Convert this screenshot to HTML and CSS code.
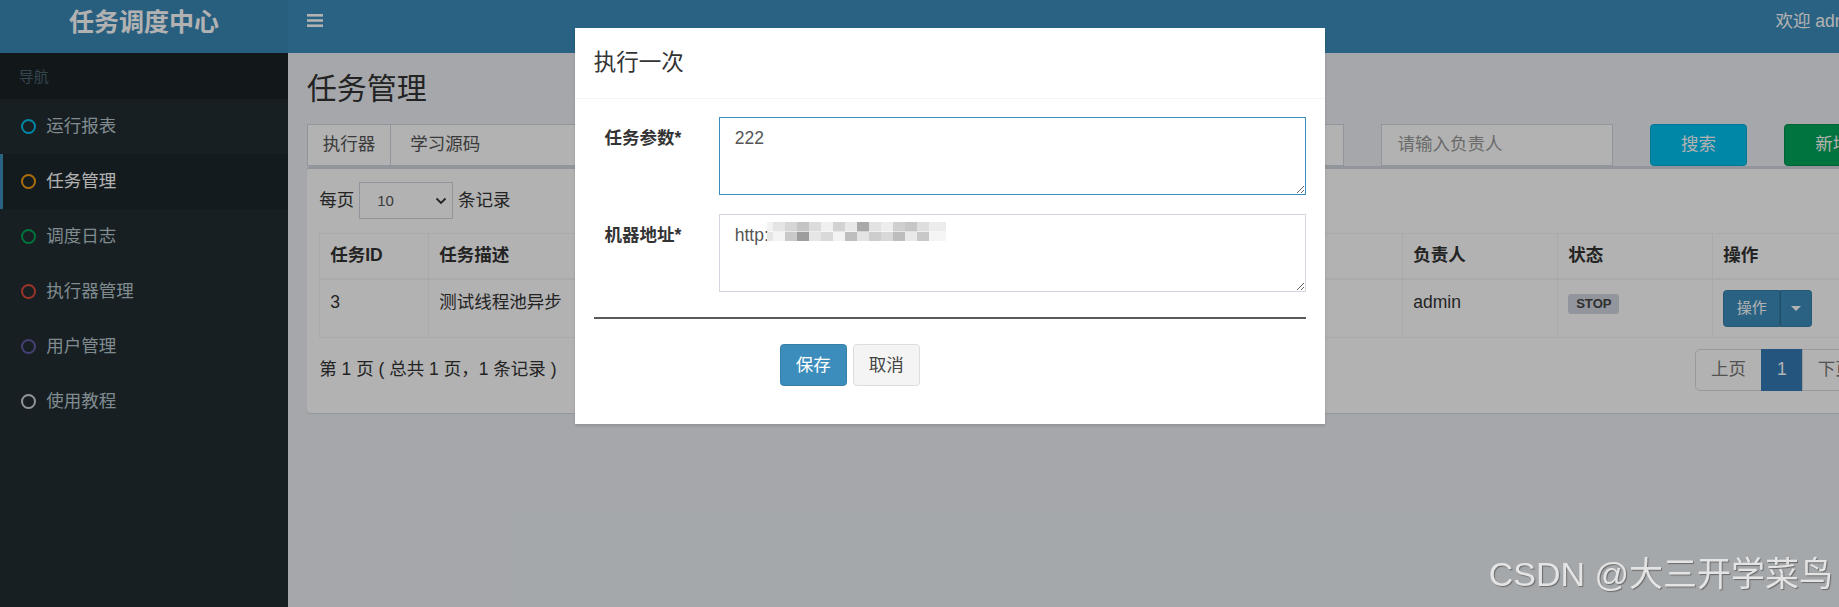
FILE: index.html
```html
<!DOCTYPE html>
<html lang="zh-CN">
<head>
    <meta charset="UTF-8">
    <meta name="viewport" content="width=device-width, initial-scale=1.0">
    <title>任务调度中心</title>
    <link rel="stylesheet" href="styles.css">
</head>
<body>

<div class="wrapper">

    <!-- Header -->
    <a class="logo" href="#">任务调度中心</a>
    <nav class="navbar">
        <a class="sidebar-toggle" href="#" title="切换导航">
            <svg width="16" height="13" viewBox="0 0 16 13">
                <rect x="0" y="0" width="16" height="2.6"/>
                <rect x="0" y="5.2" width="16" height="2.6"/>
                <rect x="0" y="10.4" width="16" height="2.6"/>
            </svg>
        </a>
        <div class="navbar-user">欢迎 admin</div>
    </nav>

    <!-- Sidebar -->
    <aside class="sidebar">
        <div class="sidebar-header">导航</div>
        <ul class="sidebar-menu">
            <li><a href="#"><i class="dot dot-aqua"></i>运行报表</a></li>
            <li class="active"><a href="#"><i class="dot dot-yellow"></i>任务管理</a></li>
            <li><a href="#"><i class="dot dot-green"></i>调度日志</a></li>
            <li><a href="#"><i class="dot dot-red"></i>执行器管理</a></li>
            <li><a href="#"><i class="dot dot-purple"></i>用户管理</a></li>
            <li><a href="#"><i class="dot dot-gray"></i>使用教程</a></li>
        </ul>
    </aside>

    <!-- Main content -->
    <main class="content-wrapper">
        <h1 class="content-title">任务管理</h1>

        <div class="filter-row">
            <div class="col-3">
                <div class="input-group">
                    <span class="input-addon">执行器</span>
                    <select class="form-control">
                        <option>学习源码</option>
                    </select>
                </div>
            </div>
            <div class="col-1">
                <select class="form-control">
                    <option>全部</option>
                </select>
            </div>
            <div class="col-2">
                <input class="form-control" type="text" placeholder="请输入任务描述">
            </div>
            <div class="col-2">
                <input class="form-control" type="text" placeholder="请输入JobHandler">
            </div>
            <div class="col-2">
                <input class="form-control" type="text" placeholder="请输入负责人">
            </div>
            <div class="col-1">
                <button class="btn btn-info btn-block">搜索</button>
            </div>
            <div class="col-1">
                <button class="btn btn-success btn-block">新增</button>
            </div>
        </div>

        <div class="box">
            <div class="box-body">
                <div class="table-length">
                    每页
                    <span class="select-wrap">
                        <select class="length-select">
                            <option>10</option>
                            <option>25</option>
                            <option>50</option>
                        </select>
                        <svg class="chevron" width="12" height="8" viewBox="0 0 12 8">
                            <path d="M1.5 1.5 L6 6 L10.5 1.5" fill="none" stroke="#333" stroke-width="1.8"/>
                        </svg>
                    </span>
                    条记录
                </div>

                <table class="table">
                    <colgroup>
                        <col class="w-id">
                        <col class="w-desc">
                        <col class="w-cron">
                        <col class="w-mode">
                        <col class="w-author">
                        <col class="w-status">
                        <col>
                    </colgroup>
                    <thead>
                        <tr>
                            <th>任务ID</th>
                            <th>任务描述</th>
                            <th>调度类型</th>
                            <th>运行模式</th>
                            <th>负责人</th>
                            <th>状态</th>
                            <th>操作</th>
                        </tr>
                    </thead>
                    <tbody>
                        <tr>
                            <td>3</td>
                            <td>测试线程池异步</td>
                            <td>CRON：0/5 * * * * ?</td>
                            <td>BEAN：demoJobHandler</td>
                            <td>admin</td>
                            <td><span class="label">STOP</span></td>
                            <td>
                                <div class="btn-group">
                                    <button class="btn btn-primary btn-sm">操作</button>
                                    <button class="btn btn-primary btn-sm dropdown-toggle"><span class="caret"></span></button>
                                </div>
                            </td>
                        </tr>
                    </tbody>
                </table>

                <div class="table-footer">
                    <div class="table-info">第 1 页 ( 总共 1 页，1 条记录 )</div>
                    <ul class="pagination">
                        <li class="disabled"><a href="#">上页</a></li>
                        <li class="active"><a href="#">1</a></li>
                        <li class="disabled"><a href="#">下页</a></li>
                    </ul>
                </div>
            </div>
        </div>
    </main>

    <!-- Trigger modal -->
    <div class="modal-backdrop"></div>
    <div class="modal">
        <div class="modal-dialog">
            <div class="modal-header">
                <h4 class="modal-title">执行一次</h4>
            </div>
            <div class="modal-body">
                <form class="form-horizontal">
                    <div class="form-group">
                        <label class="control-label">任务参数*</label>
                        <div class="control">
                            <textarea class="form-control textarea is-focused">222</textarea>
                        </div>
                    </div>
                    <div class="form-group">
                        <label class="control-label">机器地址*</label>
                        <div class="control">
                            <textarea class="form-control textarea">http:</textarea>
                            <!-- address blurred in the screenshot -->
                            <div class="mosaic"></div>
                        </div>
                    </div>
                    <hr>
                    <div class="form-actions">
                        <button type="button" class="btn btn-primary">保存</button>
                        <button type="button" class="btn btn-default">取消</button>
                    </div>
                </form>
            </div>
        </div>
    </div>
</div>

<div class="watermark">CSDN @大三开学菜鸟</div>

</body>
</html>
```

FILE: styles.css
```css
* {
    box-sizing: border-box;
}

html, body {
    margin: 0;
    padding: 0;
    height: 100%;
    overflow: hidden;
}

body {
    font-family: "Liberation Sans", "Noto Sans CJK SC", sans-serif;
    font-size: 17.5px;
    line-height: 25px;
    color: #333;
    background-color: #ecf0f5;
}

/* Page layout: header row + sidebar column */
.wrapper {
    position: relative;
    width: 1900px;
    height: 100vh;
    display: grid;
    grid-template-columns: 288px 1fr;
    grid-template-rows: 53px 1fr;
}

/* Header */
.logo {
    background-color: #3a88b6;
    color: #fff;
    font-size: 25px;
    font-weight: bold;
    line-height: 44px;
    text-align: center;
    text-decoration: none;
}

.navbar {
    background-color: #3c8dbc;
    display: flex;
    justify-content: space-between;
    align-items: flex-start;
}

.sidebar-toggle {
    display: block;
    padding: 14px 18.75px;
    line-height: 0;
}

.sidebar-toggle svg {
    fill: #fff;
}

.navbar-user {
    color: #fff;
    padding: 8.5px 37px 0 0;
    white-space: nowrap;
}

/* Sidebar */
.sidebar {
    background-color: #222d32;
}

.sidebar-header {
    background-color: #1a2226;
    color: #4b646f;
    font-size: 15px;
    line-height: 21px;
    padding: 12.5px 18.75px;
}

.sidebar-menu {
    list-style: none;
    margin: 0;
    padding: 0;
}

.sidebar-menu a {
    display: flex;
    align-items: center;
    height: 55px;
    padding-left: 17.75px;
    border-left: 3.75px solid transparent;
    color: #b8c7ce;
    text-decoration: none;
}

.sidebar-menu .active a {
    background-color: #1e282c;
    border-left-color: #3c8dbc;
    color: #fff;
}

.dot {
    display: inline-block;
    width: 15.5px;
    height: 15.5px;
    border: 2.6px solid;
    border-radius: 50%;
    margin-right: 10px;
}

.dot-aqua { border-color: #00c0ef; }
.dot-yellow { border-color: #f39c12; }
.dot-green { border-color: #00a65a; }
.dot-red { border-color: #dd4b39; }
.dot-purple { border-color: #605ca8; }
.dot-gray { border-color: #d2d6de; }

/* Content */
.content-wrapper {
    padding: 18.75px;
    min-width: 0;
}

.content-title {
    margin: 0 0 18.75px;
    font-size: 30px;
    line-height: 33px;
    font-weight: normal;
}

.filter-row {
    display: flex;
    margin: 0 -18.75px;
}

.col-1, .col-2, .col-3 {
    padding: 0 18.75px;
}

.col-1 { width: 8.3333%; }
.col-2 { width: 16.6667%; }
.col-3 { width: 25%; }

.form-control {
    display: block;
    width: 100%;
    height: 42.5px;
    padding: 7.5px 15px;
    font: inherit;
    color: #555;
    background-color: #fff;
    border: 1px solid #d2d6de;
    border-radius: 0;
    outline: none;
}

select.form-control {
    appearance: none;
    padding-left: 19px;
}

.form-control::placeholder {
    color: #999;
}

.input-group {
    display: flex;
}

.input-addon {
    padding: 7.5px 15px;
    color: #555;
    background-color: #fff;
    border: 1px solid #d2d6de;
    border-right: 0;
    white-space: nowrap;
}

/* Buttons */
.btn {
    display: inline-block;
    padding: 7.5px 15px;
    font: inherit;
    border: 1px solid transparent;
    border-radius: 3.75px;
    cursor: pointer;
}

.btn-block {
    display: block;
    width: 100%;
}

.btn-info {
    background-color: #00c0ef;
    border-color: #00acd6;
    color: #fff;
}

.btn-success {
    background-color: #00a65a;
    border-color: #008d4c;
    color: #fff;
}

.btn-primary {
    background-color: #3c8dbc;
    border-color: #367fa9;
    color: #fff;
}

.btn-default {
    background-color: #f4f4f4;
    border-color: #ddd;
    color: #444;
}

.btn-sm {
    padding: 6.25px 12.5px;
    font-size: 15px;
    line-height: 22.5px;
}

.btn-group {
    display: inline-flex;
}

.btn-group .btn:first-child {
    border-radius: 3.75px 0 0 3.75px;
}

.dropdown-toggle {
    border-radius: 0 3.75px 3.75px 0;
    padding-left: 10px;
    padding-right: 10px;
    border-left-color: #2f7099;
}

.caret {
    display: inline-block;
    width: 0;
    height: 0;
    border-top: 5px solid #fff;
    border-left: 5px solid transparent;
    border-right: 5px solid transparent;
    vertical-align: middle;
}

/* Box with the job table */
.box {
    background-color: #fff;
    border-top: 3.75px solid #d2d6de;
    border-radius: 3.75px;
    box-shadow: 0 1px 1px rgba(0, 0, 0, 0.1);
}

.box-body {
    padding: 12.5px 12.5px 22px;
}

.table-length {
    display: flex;
    align-items: center;
    gap: 5px;
    margin-bottom: 13.5px;
}

.select-wrap {
    position: relative;
    display: inline-block;
}

.length-select {
    appearance: none;
    width: 93.75px;
    height: 37.5px;
    padding: 0 17px;
    font-family: inherit;
    font-size: 15px;
    color: #555;
    background-color: #fff;
    border: 1px solid #d2d6de;
    border-radius: 0;
}

.chevron {
    position: absolute;
    right: 6px;
    top: 15px;
    pointer-events: none;
}

.table {
    width: 100%;
    border-collapse: collapse;
    table-layout: fixed;
    border: 1px solid #f4f4f4;
}

.table th,
.table td {
    border: 1px solid #f4f4f4;
    padding: 10px;
    text-align: left;
    vertical-align: top;
    white-space: nowrap;
    overflow: hidden;
}

.table thead th {
    padding: 9.5px 10px;
    border-bottom-width: 2px;
    font-weight: bold;
}

.w-id { width: 109px; }
.w-desc { width: 260px; }
.w-cron { width: 360px; }
.w-mode { width: 354px; }
.w-author { width: 155px; }
.w-status { width: 155px; }

.label {
    display: inline-block;
    padding: 0.2em 0.6em 0.3em;
    font-size: 75%;
    font-weight: bold;
    line-height: 1;
    color: #444;
    background-color: #d2d6de;
    border-radius: 0.25em;
}

.table-footer {
    display: flex;
    justify-content: space-between;
    align-items: center;
    margin-top: 11px;
}

.pagination {
    display: flex;
    list-style: none;
    margin: 0;
    padding: 0;
}

.pagination a {
    display: block;
    padding: 7.5px 15px;
    margin-left: -1px;
    color: #777;
    background-color: #fff;
    border: 1px solid #ddd;
    text-decoration: none;
}

.pagination li:first-child a {
    margin-left: 0;
    border-radius: 5px 0 0 5px;
}

.pagination li:last-child a {
    border-radius: 0 5px 5px 0;
}

.pagination .active a {
    background-color: #337ab7;
    border-color: #337ab7;
    color: #fff;
}

/* Modal */
.modal-backdrop {
    position: absolute;
    top: 0;
    left: 0;
    right: 0;
    bottom: 0;
    background-color: rgba(0, 0, 0, 0.3);
}

.modal {
    position: absolute;
    top: 0;
    left: 0;
    right: 0;
    bottom: 0;
}

.modal-dialog {
    width: 750px;
    margin: 28px auto 0;
    background-color: #fff;
    box-shadow: 0 2px 3px rgba(0, 0, 0, 0.125);
}

.modal-header {
    padding: 18.75px;
    border-bottom: 1px solid #f4f4f4;
}

.modal-title {
    margin: 0;
    font-size: 22.5px;
    line-height: 32px;
    font-weight: normal;
}

.modal-body {
    padding: 18.75px;
}

.form-horizontal {
    margin: 0;
}

.form-group {
    display: flex;
    margin: 0 -18.75px 18.75px;
}

.control-label {
    width: 125px;
    padding: 8.75px 18.75px 0;
    text-align: right;
    font-weight: bold;
    white-space: nowrap;
}

.control {
    position: relative;
    width: 625px;
    padding: 0 18.75px;
}

.textarea {
    height: 78px;
    resize: vertical;
}

.is-focused {
    border-color: #3c8dbc;
}

/* Pixelated part of the address */
.mosaic {
    position: absolute;
    left: 67px;
    top: 8px;
    width: 179px;
    height: 19px;
    background-image:
        linear-gradient(90deg, #f2f2f2 0 6px, #e4e4e4 6px 18px, #d6d6d6 18px 30px, #c4c4c4 30px 42px, #dcdcdc 42px 54px, #f0f0f0 54px 66px, #d2d2d2 66px 78px, #e8e8e8 78px 90px, #a9a9a9 90px 102px, #e2e2e2 102px 114px, #ededed 114px 126px, #cfcfcf 126px 138px, #c6c6c6 138px 150px, #dedede 150px 162px, #ececec 162px 179px),
        linear-gradient(90deg, #e6e6e6 0 6px, #f4f4f4 6px 18px, #c9c9c9 18px 30px, #9d9d9d 30px 42px, #e6e6e6 42px 54px, #d9d9d9 54px 66px, #f3f3f3 66px 78px, #bebebe 78px 90px, #e4e4e4 90px 102px, #cdcdcd 102px 114px, #d8d8d8 114px 126px, #bdbdbd 126px 138px, #e9e9e9 138px 150px, #c8c8c8 150px 162px, #f5f5f5 162px 179px);
    background-size: 179px 9.5px, 179px 9.5px;
    background-position: 0 0, 0 9.5px;
    background-repeat: no-repeat;
}

hr {
    margin: 25px 0;
    border: 0;
    border-top: 2px solid #5a5a5a;
}

.form-actions {
    display: flex;
    gap: 6px;
    margin-left: 186px;
    margin-bottom: 18.75px;
}

/* Image watermark */
.watermark {
    position: fixed;
    right: 6px;
    bottom: 13px;
    font-size: 34px;
    line-height: 40px;
    color: #e4e4e4;
    text-shadow: 1px 1px 1px #6a6a6a;
    white-space: nowrap;
}
```
